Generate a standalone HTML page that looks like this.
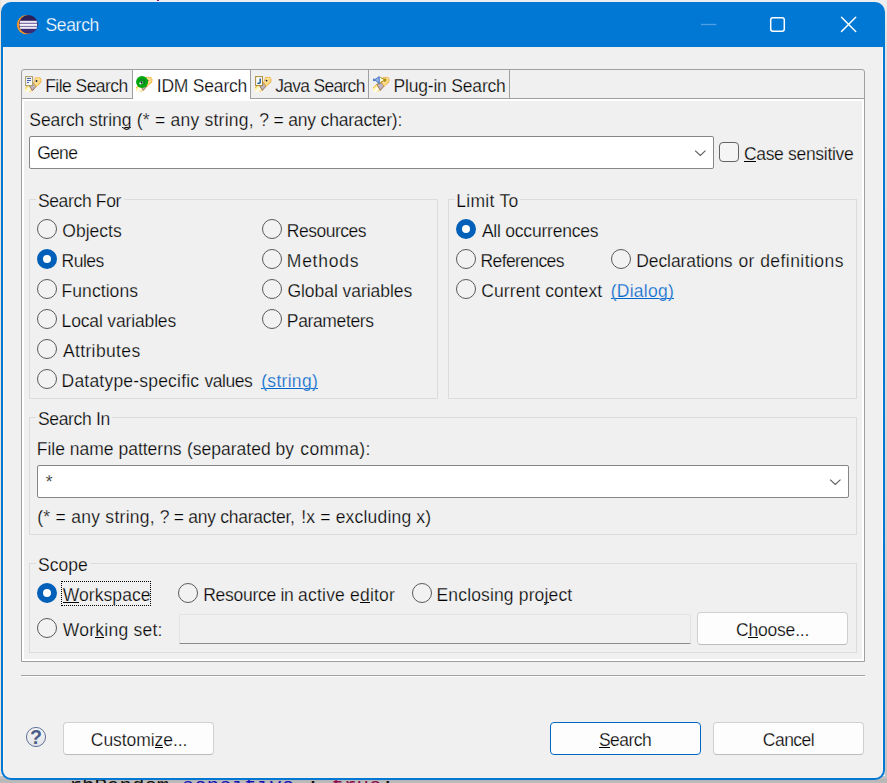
<!DOCTYPE html>
<html><head><meta charset="utf-8"><title>Search</title>
<style>
html,body{margin:0;padding:0;}
body{width:887px;height:783px;position:relative;overflow:hidden;background:#eeeeee;font-family:"Liberation Sans",sans-serif;font-size:17.5px;color:#000;}
.a{position:absolute;}
.t{position:absolute;white-space:nowrap;line-height:20px;height:20px;-webkit-text-stroke:.25px #f0f0f0;}
.t u{text-decoration:none;background:linear-gradient(currentColor,currentColor) 0 17px/100% 1px no-repeat;}
#win{left:1px;top:2px;width:884px;height:778px;background:#0078d4;border-radius:10px 10px 10px 10px;}
#client{left:3px;top:47px;width:880px;height:731px;background:#f0f0f0;border-radius:0 0 8px 8px;}
.grp{position:absolute;border:1px solid #dcdcdc;box-sizing:border-box;}
.gl{position:absolute;background:#f0f0f0;height:20px;}
.rad{position:absolute;width:20px;height:20px;box-sizing:border-box;border:1px solid #5a5a5a;border-radius:50%;background:#f2f2f2;}
.rad.on{border:6px solid #005fb8;background:#fff;}
.combo{position:absolute;box-sizing:border-box;border:1px solid #868686;border-radius:2px;background:#fff;}
.btn{position:absolute;box-sizing:border-box;border:1px solid #d0d0d0;border-bottom-color:#bcbcbc;border-radius:4px;background:#fdfdfd;}
</style></head><body>
<!-- desktop / editor behind the dialog -->
<div class="a" style="left:0;top:0;width:1px;height:783px;background:#ebe1d7;"></div>
<div class="a" style="left:885px;top:0;width:2px;height:783px;background:linear-gradient(#eeeeee 0,#e2e2e2 40px,#d6d6d6 60%,#c2c2c2 100%);"></div>
<div class="a" style="left:0;top:776px;width:887px;height:7px;background:linear-gradient(#c8c8c8,#b6b6b6 55%,#bcbcbc);"></div>
<div class="a" style="left:157px;top:0;width:2px;height:1px;background:#8a1a8a;"></div>
<div class="a" style="left:69.5px;top:775px;font-family:'Liberation Mono',monospace;font-size:20.8px;line-height:23px;white-space:nowrap;color:#111;">rbRandom<span style="color:#1414b8">.sensitive</span> : <span style="color:#8a1050">true</span>;</div>
<div class="a" id="win"></div>
<div class="a" id="client"></div>
<div class="a" style="left:3px;top:48px;width:1px;height:722px;background:#fbf7f2;"></div>
<div class="a" style="left:882px;top:48px;width:1px;height:722px;background:#fbf7f2;"></div>

<!-- title bar -->
<svg class="a" style="left:16px;top:14px" width="23" height="22" viewBox="0 0 23 22">
  <defs><linearGradient id="ecl" x1="0" y1="0" x2="0" y2="1"><stop offset="0" stop-color="#271d50"/><stop offset="1" stop-color="#3b2d7c"/></linearGradient></defs>
  <circle cx="10.4" cy="10.7" r="9.6" fill="#f0962a"/>
  <circle cx="12.4" cy="10.45" r="9.4" fill="url(#ecl)"/>
  <clipPath id="ec"><circle cx="12.4" cy="10.45" r="9.2"/></clipPath><g clip-path="url(#ec)"><rect x="3.4" y="6.7" width="18" height="8.1" fill="#7466a0"/>
  <rect x="3.8" y="6.9" width="17" height="1.9" fill="#ece8f6"/>
  <rect x="3.4" y="9.9" width="17.6" height="2" fill="#f4f2fa"/>
  <rect x="3.8" y="12.9" width="17" height="1.9" fill="#ece8f6"/></g>
</svg>
<svg class="a" style="left:696px;top:10px" width="170" height="30" viewBox="0 0 170 30">
  <path d="M5 14.5H20.5" stroke="#4f9fe2" stroke-width="1.3" fill="none"/>
  <rect x="74.7" y="7.7" width="13.6" height="13.6" rx="2.2" fill="none" stroke="#fff" stroke-width="1.5"/>
  <path d="M145.5 7.3L159.7 21.5M159.7 7.3L145.5 21.5" stroke="#fff" stroke-width="1.5" fill="none" stroke-linecap="round"/>
</svg>

<!-- tab folder -->
<div class="a" style="left:21px;top:69px;width:844px;height:593px;box-sizing:border-box;border:1px solid #a0a0a0;border-radius:3px 3px 0 0;background:#f0f0f0;"></div>
<div class="a" style="left:22px;top:99px;width:842px;height:562px;background:#fff;"></div>
<div class="a" style="left:21px;top:98px;width:844px;height:1px;background:#a0a0a0;"></div>
<div class="a" style="left:24px;top:101px;width:838px;height:558px;background:#f0f0f0;"></div>
<!-- tab separators -->
<div class="a" style="left:132px;top:70px;width:1px;height:28px;background:#a0a0a0;"></div>
<div class="a" style="left:250px;top:70px;width:1px;height:28px;background:#a0a0a0;"></div>
<div class="a" style="left:368px;top:70px;width:1px;height:28px;background:#a0a0a0;"></div>
<div class="a" style="left:509px;top:70px;width:1px;height:28px;background:#a0a0a0;"></div>
<!-- selected tab -->
<div class="a" style="left:133px;top:70px;width:117px;height:31px;background:#fff;"></div>
<svg width="0" height="0" style="position:absolute"><defs>
<linearGradient id="cone" x1="0" y1="0" x2="1" y2="1"><stop offset="0" stop-color="#f8c030"/><stop offset=".3" stop-color="#fff080"/><stop offset=".6" stop-color="#ffffff"/><stop offset="1" stop-color="#f6c840"/></linearGradient>
<linearGradient id="head" x1="0" y1="0" x2="1" y2="1"><stop offset="0" stop-color="#fdf3b8"/><stop offset="1" stop-color="#f7c860"/></linearGradient>
<g id="torch">
  <path d="M0 12L3.7 8.3L7.4 14.4L5.2 15.9H0Z" fill="url(#cone)"/>
  <path d="M0 12L3.7 8.3" stroke="#f0a020" stroke-width="1" stroke-dasharray="1 .5" fill="none"/>
  <path d="M3.7 8.3L8.9 6.7L11 10.1L7.4 14.4Z" fill="#bcb4c6" stroke="#9a7038" stroke-width=".9"/>
  <path d="M10.5 1.4H15.1L16 3.2V6L11.1 10.3L8.7 6.6Z" fill="url(#head)" stroke="#f0a428" stroke-width="1" stroke-dasharray="1.1 .45"/>
  <circle cx="11.5" cy="4.6" r=".95" fill="#1a1a40"/>
</g></defs></svg>
<!-- File Search icon -->
<svg class="a" style="left:25px;top:76px" width="17" height="17" viewBox="0 0 17 17">
  <use href="#torch" y=".4"/>
  <rect x=".6" y=".6" width="7" height="9" fill="#f4f7ff" stroke="#ada06a" stroke-width="1.1"/>
  <path d="M2 2.5H6M2 4.5H6M2 6.5H4" stroke="#4a62aa" stroke-width="1"/>
</svg>
<!-- IDM Search icon -->
<svg class="a" style="left:136px;top:75px" width="17" height="17" viewBox="0 0 17 17">
  <use href="#torch" y="1"/>
  <circle cx="6.05" cy="6.95" r="6" fill="#00a80c"/>
  <path d="M2.6 7.6C3 3.6 7.6 2.6 9.4 5.6C10.4 8.6 7.2 11.4 4.2 10.2C6.6 10.2 8.4 8.4 7.6 6.2C6.4 4.6 3.8 5.2 2.6 7.6Z" fill="#0d7a3a" opacity=".75"/>
  <ellipse cx="5.2" cy="7.9" rx="2.1" ry="1.2" transform="rotate(-25 5.2 7.9)" fill="#e8f4f4"/>
  <circle cx="5.6" cy="7.6" r="1" fill="#160828"/>
</svg>
<!-- Java Search icon -->
<svg class="a" style="left:255px;top:76px" width="17" height="17" viewBox="0 0 17 17">
  <use href="#torch"/>
  <rect x=".6" y=".6" width="6.9" height="8.9" fill="#fff" stroke="#ad8f3a" stroke-width="1.05"/>
  <path d="M5.2 2.4V6.2C5.2 7.4 4 7.5 2.4 7.2" fill="none" stroke="#22609c" stroke-width="1.5"/>
</svg>
<!-- Plug-in Search icon -->
<svg class="a" style="left:373px;top:76px" width="17" height="17" viewBox="0 0 17 17">
  <use href="#torch"/>
  <path d="M7.3 1.3L10.4 3H12.9V4.9H10.4L7.3 6.5" fill="#fff8d8" stroke="#a88c10" stroke-width="1"/><rect x="10.4" y="3" width="2.5" height="1.9" fill="#b09408"/>
  <path d="M6.2 .6V7.4L2.8 4.6H.3V3.2H2.8Z" fill="#9cb8e6" stroke="#2c62c0" stroke-width=".9" stroke-linejoin="round"/>
</svg>


<!-- search string combo -->
<div class="combo" style="left:29px;top:136px;width:685px;height:33px;"></div>
<svg class="a" style="left:692px;top:147px" width="16" height="12" viewBox="0 0 16 12"><path d="M3.1 3.6L8.3 8.4L13.5 3.6" fill="none" stroke="#5a5a5a" stroke-width="1.1"/></svg>
<div class="a" style="left:719px;top:142px;width:20px;height:20px;box-sizing:border-box;border:1px solid #626262;border-radius:4px;background:#f5f5f5;"></div>

<!-- groups -->
<div class="grp" style="left:29px;top:199px;width:409px;height:200px;"></div>
<div class="grp" style="left:448px;top:199px;width:409px;height:200px;"></div>
<div class="grp" style="left:29px;top:417px;width:828px;height:118px;"></div>
<div class="grp" style="left:29px;top:563px;width:828px;height:90px;"></div>
<div class="gl" style="left:36px;top:190px;width:88px;"></div>
<div class="gl" style="left:455px;top:190px;width:65px;"></div>
<div class="gl" style="left:36px;top:408px;width:76px;"></div>
<div class="gl" style="left:36px;top:554px;width:54px;"></div>

<!-- radios -->
<div class="rad" style="left:37px;top:219px"></div>
<div class="rad on" style="left:37px;top:249px"></div>
<div class="rad" style="left:37px;top:279px"></div>
<div class="rad" style="left:37px;top:309px"></div>
<div class="rad" style="left:37px;top:339px"></div>
<div class="rad" style="left:37px;top:369px"></div>
<div class="rad" style="left:262px;top:219px"></div>
<div class="rad" style="left:262px;top:249px"></div>
<div class="rad" style="left:262px;top:279px"></div>
<div class="rad" style="left:262px;top:309px"></div>
<div class="rad on" style="left:456px;top:219px"></div>
<div class="rad" style="left:456px;top:249px"></div>
<div class="rad" style="left:456px;top:279px"></div>
<div class="rad" style="left:611px;top:249px"></div>
<div class="rad on" style="left:37px;top:583px"></div>
<div class="rad" style="left:178px;top:583px"></div>
<div class="rad" style="left:412px;top:583px"></div>
<div class="rad" style="left:37px;top:618px"></div>


<!-- file pattern combo -->
<div class="combo" style="left:37px;top:465px;width:812px;height:33px;"></div>
<svg class="a" style="left:827px;top:476px" width="16" height="12" viewBox="0 0 16 12"><path d="M3.1 3.6L8.3 8.4L13.5 3.6" fill="none" stroke="#5a5a5a" stroke-width="1.1"/></svg>

<!-- focus ring -->
<div class="a" style="left:61px;top:581px;width:90px;height:25px;box-sizing:border-box;border:1px dotted #000;"></div>
<!-- disabled working set text -->
<div class="a" style="left:179px;top:614px;width:512px;height:30px;box-sizing:border-box;border:1px solid #e3e3e3;border-bottom-color:#8c8c8c;background:#f0f0f0;border-radius:2px 2px 0 0"></div>

<!-- buttons -->
<div class="btn" style="left:697px;top:612px;width:151px;height:33px;"></div>
<div class="btn" style="left:63px;top:722px;width:151px;height:33px;"></div>
<div class="btn" style="left:550px;top:722px;width:151px;height:33px;border-color:#0067c0;"></div>
<div class="btn" style="left:713px;top:722px;width:151px;height:33px;"></div>

<!-- separator -->
<div class="a" style="left:21px;top:675px;width:844px;height:1px;background:#a0a0a0;"></div>
<div class="a" style="left:21px;top:676px;width:844px;height:1px;background:#fff;"></div>

<!-- help icon -->
<svg class="a" style="left:25px;top:726px" width="22" height="22" viewBox="0 0 22 22">
  <defs><linearGradient id="hg" x1="0" y1="0" x2="0" y2="1"><stop offset="0" stop-color="#f6f6f7"/><stop offset="1" stop-color="#e2e3e8"/></linearGradient></defs>
  <circle cx="11" cy="11" r="9.55" fill="url(#hg)" stroke="#5d7096" stroke-width="1"/>
  <text x="10.9" y="17.9" text-anchor="middle" font-family="Liberation Sans, sans-serif" font-weight="bold" font-size="19.5" fill="#4a5d86">?</text>
</svg>

<span class="t" id="t_title" style="left:45.41px;top:15px;color:#fff;letter-spacing:-0.309px;-webkit-text-stroke-color:#0078d4;">Search</span>
<span class="t" id="t_tab1" style="left:45.17px;top:76px;letter-spacing:-0.538px;">File Search</span>
<span class="t" id="t_tab2" style="left:156.74px;top:76px;letter-spacing:-0.201px;-webkit-text-stroke-color:#fff;">IDM Search</span>
<span class="t" id="t_tab3" style="left:275.26px;top:76px;letter-spacing:-0.715px;">Java Search</span>
<span class="t" id="t_tab4" style="left:393.47px;top:76px;letter-spacing:-0.185px;">Plug-in Search</span>
<span class="t" id="t_sstr" style="left:29.30px;top:110px;letter-spacing:-0.079px;">Search strin<u>g</u></span>
<span class="t" id="t_sstr2" style="left:136.66px;top:110px;letter-spacing:0.245px;">(* = any string,</span>
<span class="t" id="t_sstr3" style="left:259.35px;top:110px;letter-spacing:-0.191px;">? = any character):</span>
<span class="t" id="t_gene" style="left:37.13px;top:143px;letter-spacing:-0.678px;-webkit-text-stroke-color:#fff;">Gene</span>
<span class="t" id="t_case" style="left:743.91px;top:144px;letter-spacing:-0.310px;"><u>C</u>ase sensitive</span>
<span class="t" id="t_sfor" style="left:37.88px;top:191px;letter-spacing:-0.343px;">Search For</span>
<span class="t" id="t_obj" style="left:62.28px;top:221px;letter-spacing:0.011px;">Objects</span>
<span class="t" id="t_rules" style="left:61.56px;top:251px;letter-spacing:-0.491px;">Rules</span>
<span class="t" id="t_func" style="left:61.56px;top:281px;letter-spacing:0.065px;">Functions</span>
<span class="t" id="t_local" style="left:61.56px;top:311px;letter-spacing:-0.148px;">Local variables</span>
<span class="t" id="t_attr" style="left:62.89px;top:341px;letter-spacing:0.378px;">Attributes</span>
<span class="t" id="t_dtype" style="left:61.58px;top:371px;letter-spacing:0.204px;">Datatype-specific</span>
<span class="t" id="t_dtype2" style="left:204.41px;top:371px;letter-spacing:-0.425px;">values</span>
<span class="t" id="t_string" style="left:261.21px;top:371px;color:#0066cc;letter-spacing:0.301px;"><u>(string)</u></span>
<span class="t" id="t_res" style="left:286.86px;top:221px;letter-spacing:-0.510px;">Resources</span>
<span class="t" id="t_meth" style="left:286.82px;top:251px;letter-spacing:0.749px;">Methods</span>
<span class="t" id="t_glob" style="left:287.44px;top:281px;letter-spacing:-0.046px;">Global variables</span>
<span class="t" id="t_param" style="left:286.86px;top:311px;letter-spacing:-0.366px;">Parameters</span>
<span class="t" id="t_limit" style="left:456.37px;top:191px;letter-spacing:0.255px;">Limit To</span>
<span class="t" id="t_all" style="left:481.89px;top:221px;letter-spacing:-0.218px;">All occurrences</span>
<span class="t" id="t_refs" style="left:480.56px;top:251px;letter-spacing:-0.621px;">References</span>
<span class="t" id="t_decl" style="left:636.21px;top:251px;letter-spacing:-0.078px;">Declarations</span>
<span class="t" id="t_decl2" style="left:738.38px;top:251px;letter-spacing:0.449px;">or definitions</span>
<span class="t" id="t_cur" style="left:481.27px;top:281px;letter-spacing:0.084px;">Current context</span>
<span class="t" id="t_dialog" style="left:610.76px;top:281px;color:#0066cc;letter-spacing:0.247px;"><u>(Dialog)</u></span>
<span class="t" id="t_sin" style="left:37.88px;top:409px;letter-spacing:-0.312px;">Search In</span>
<span class="t" id="t_fnp" style="left:36.82px;top:439px;letter-spacing:-0.008px;">File name patterns</span>
<span class="t" id="t_fnp2" style="left:186.99px;top:439px;letter-spacing:-0.004px;">(separated by</span>
<span class="t" id="t_fnp3" style="left:300.32px;top:439px;letter-spacing:0.314px;">comma):</span>
<span class="t" id="t_star" style="left:45.80px;top:472px;-webkit-text-stroke-color:#fff;">*</span>
<span class="t" id="t_hint" style="left:37.21px;top:507px;letter-spacing:0.277px;">(* = any string,</span>
<span class="t" id="t_hint2" style="left:159.71px;top:507px;letter-spacing:-0.261px;">? = any character,</span>
<span class="t" id="t_hint3" style="left:301.20px;top:507px;letter-spacing:0.188px;">!x = excluding x)</span>
<span class="t" id="t_scope" style="left:37.88px;top:555px;letter-spacing:0.086px;">Scope</span>
<span class="t" id="t_ws" style="left:62.79px;top:585px;letter-spacing:0.062px;"><u>W</u>orkspace</span>
<span class="t" id="t_rae" style="left:203.21px;top:585px;letter-spacing:-0.274px;">Resource in</span>
<span class="t" id="t_rae2" style="left:298.11px;top:585px;letter-spacing:0.198px;">active e<u>d</u>itor</span>
<span class="t" id="t_encl" style="left:436.56px;top:585px;letter-spacing:0.146px;">Enclosing pro<u>j</u>ect</span>
<span class="t" id="t_wset" style="left:62.79px;top:620px;letter-spacing:0.242px;">Wor<u>k</u>ing set:</span>
<span class="t" id="t_choose" style="left:735.99px;top:620px;letter-spacing:-0.195px;-webkit-text-stroke-color:#fdfdfd;">C<u>h</u>oose...</span>
<span class="t" id="t_cust" style="left:90.87px;top:730px;letter-spacing:-0.071px;-webkit-text-stroke-color:#fdfdfd;">Customi<u>z</u>e...</span>
<span class="t" id="t_search" style="left:598.91px;top:730px;letter-spacing:-0.521px;-webkit-text-stroke-color:#fdfdfd;"><u>S</u>earch</span>
<span class="t" id="t_cancel" style="left:762.87px;top:730px;letter-spacing:-0.532px;-webkit-text-stroke-color:#fdfdfd;">Cancel</span>

</body></html>
